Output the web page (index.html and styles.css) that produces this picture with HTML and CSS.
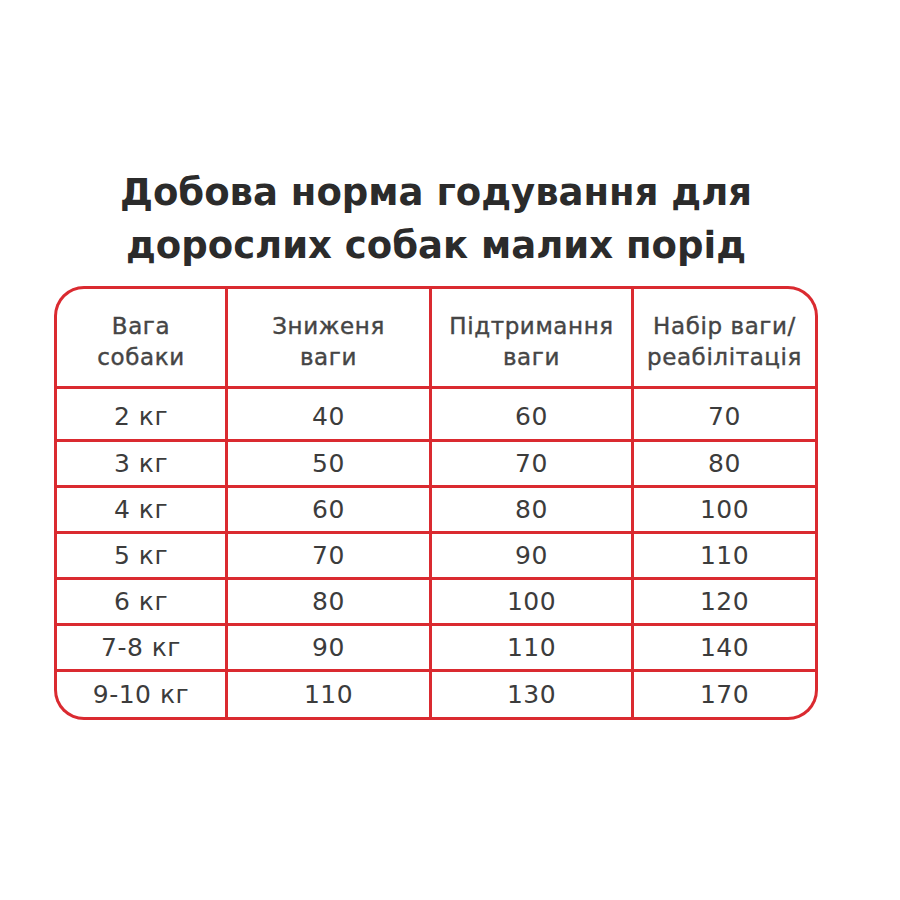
FILE: index.html
```html
<!DOCTYPE html>
<html lang="uk">
<head>
<meta charset="utf-8">
<title>Добова норма годування</title>
<link rel="stylesheet" href="styles.css">
</head>
<body>
<main class="page">
  <h1 class="title">Добова норма годування для<br>дорослих собак малих порід</h1>
  <div class="table">
    <div class="cell head c-tl">Вага<br>собаки</div>
    <div class="cell head">Зниженя<br>ваги</div>
    <div class="cell head">Підтримання<br>ваги</div>
    <div class="cell head c-tr">Набір ваги/<br>реабілітація</div>

    <div class="cell first">2 кг</div><div class="cell first">40</div><div class="cell first">60</div><div class="cell first">70</div>
    <div class="cell">3 кг</div><div class="cell">50</div><div class="cell">70</div><div class="cell">80</div>
    <div class="cell">4 кг</div><div class="cell">60</div><div class="cell">80</div><div class="cell">100</div>
    <div class="cell">5 кг</div><div class="cell">70</div><div class="cell">90</div><div class="cell">110</div>
    <div class="cell">6 кг</div><div class="cell">80</div><div class="cell">100</div><div class="cell">120</div>
    <div class="cell">7-8 кг</div><div class="cell">90</div><div class="cell">110</div><div class="cell">140</div>
    <div class="cell c-bl">9-10 кг</div><div class="cell">110</div><div class="cell">130</div><div class="cell c-br">170</div>
  </div>
</main>
</body>
</html>
```

FILE: styles.css
```css
html, body {
  margin: 0;
  padding: 0;
  background: #ffffff;
}

.page {
  width: 764px;
  margin-left: 54px;
  padding-top: 166px;
  font-family: "DejaVu Sans", "Noto Sans", sans-serif;
}

.title {
  margin: 0 0 14px;
  text-align: center;
  font-size: 37px;
  line-height: 53px;
  font-weight: 700;
  color: #2b2b2b;
}

.table {
  display: grid;
  grid-template-columns: 168px 201px 199px 181px;
  grid-template-rows: 97px 50px 43px 43px 43px 43px 43px 45px;
  gap: 3px;
  padding: 3px;
  background: #da2a30;
  border-radius: 30px;
  overflow: hidden;
}

.cell {
  background: #ffffff;
  display: flex;
  align-items: center;
  justify-content: center;
  text-align: center;
  font-size: 25px;
  letter-spacing: 0.5px;
  color: #3c3c3c;
}

.first {
  padding-top: 5px;
}

.head {
  padding-top: 8px;
  font-size: 23px;
  line-height: 31px;
  letter-spacing: 0.6px;
  color: #454545;
  -webkit-text-stroke: 0.4px #454545;
}

.c-tl { border-top-left-radius: 27px; }
.c-tr { border-top-right-radius: 27px; }
.c-bl { border-bottom-left-radius: 27px; }
.c-br { border-bottom-right-radius: 27px; }
```
